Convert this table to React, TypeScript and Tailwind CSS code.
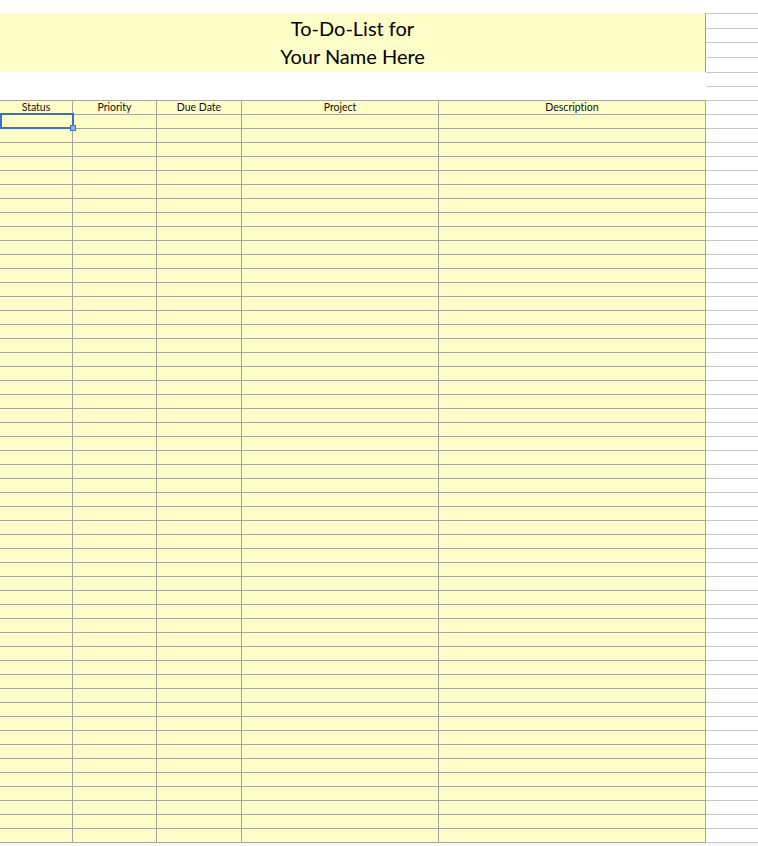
import React from "react";

const columns = [
  { label: "Status", width: "w-[73px]" },
  { label: "Priority", width: "w-[84px]" },
  { label: "Due Date", width: "w-[85px]" },
  { label: "Project", width: "w-[197px]" },
  { label: "Description", width: "w-[267px]" },
];

const rowCount = 52;

const TopSideRow = ({ h }: { h: string }) => (
  <div className={`${h} border-t border-[#c9c9c9]`} />
);

export default function App() {
  return (
    <div className="relative h-[846px] w-[758px] overflow-hidden bg-white font-['Lato','Liberation_Sans',sans-serif] text-black">
      <div className="h-[13px]" />

      {/* title band */}
      <div className="flex">
        <div className="flex h-[59px] w-[705px] flex-col items-center justify-center bg-[#fffdc8] pb-[2px] text-[20px] leading-[28px]">
          <span>To-Do-List for</span>
          <span>Your Name Here</span>
        </div>
        <div className="flex-1 border-l border-[#9c9b90]">
          <TopSideRow h="h-[15px]" />
          <TopSideRow h="h-[14px]" />
          <TopSideRow h="h-[15px]" />
          <TopSideRow h="h-[15px]" />
        </div>
      </div>

      {/* gap rows */}
      <div className="flex">
        <div className="h-[28px] w-[706px]" />
        <div className="flex-1">
          <TopSideRow h="h-[14px]" />
          <TopSideRow h="h-[14px]" />
        </div>
      </div>

      {/* table */}
      <div className="relative">
        <div className="flex h-[14px]">
          {columns.map((c) => (
            <div
              key={c.label}
              className={`${c.width} flex items-center justify-center border-t border-r border-[#a8a79a] bg-[#fffdc8] pb-[1px] text-[10.5px] font-normal leading-none text-[#111] [font-variant-ligatures:none]`}
            >
              {c.label}
            </div>
          ))}
          <div className="flex-1 border-t border-[#c9c9c9]" />
        </div>
        {Array.from({ length: rowCount }).map((_, i) => (
          <div key={i} className="flex h-[14px]">
            {columns.map((c) => (
              <div key={c.label} className={`${c.width} border-t border-r border-[#a8a79a] bg-[#fffdc8]`} />
            ))}
            <div className="flex-1 border-t border-[#c9c9c9]" />
          </div>
        ))}
        <div className="flex h-[4px]">
          <div className="w-[706px] border-t border-[#a8a79a] bg-[#f8f8fa]" />
          <div className="flex-1 border-t border-[#c9c9c9] bg-[#f8f8fa]" />
        </div>

        {/* active cell */}
        <div className="absolute left-0 top-[13px] h-[16px] w-[74px] border-2 border-[#3c6fc6]" />
        <div className="absolute left-[70px] top-[25px] h-[6px] w-[6px] border border-[#3c6fc6] bg-[#8fb4e8]" />
      </div>
    </div>
  );
}
